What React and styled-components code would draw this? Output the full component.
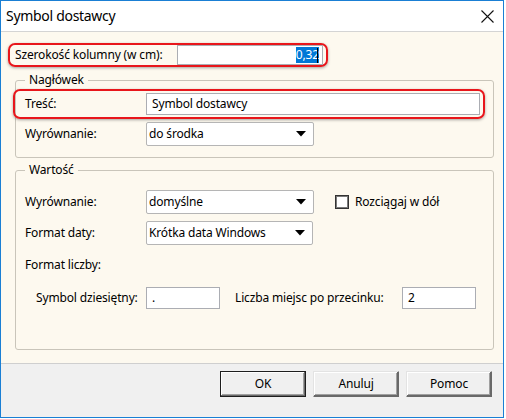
import React from "react";
import styled, { createGlobalStyle } from "styled-components";

const GlobalStyle = createGlobalStyle`
  html, body {
    margin: 0;
    padding: 0;
    background: #fff;
  }
  body {
    font-family: "Noto Sans", "Liberation Sans", sans-serif;
    font-size: 12px;
    line-height: 16px;
    letter-spacing: -0.15px;
    color: #000;
  }
`;

const Window = styled.div`
  width: 504px;
  height: 418px;
  box-sizing: border-box;
  border: 1px solid #1a7fd4;
  display: flex;
  flex-direction: column;
  background: #fff;
`;

const TitleBar = styled.div`
  height: 30px;
  border-bottom: 1px solid #d4d4d4;
  display: flex;
  align-items: center;
  justify-content: space-between;
  padding: 0 9px 0 5px;
  font-size: 14px;
  letter-spacing: -0.3px;
`;

const CloseButton = styled.div`
  width: 14px;
  height: 14px;
  display: flex;
  align-items: center;
  justify-content: center;
`;

const Body = styled.div`
  flex: 1;
  background: #fdf9ef;
  padding: 11px 9px 13px 7px;
  display: flex;
  flex-direction: column;
`;

const Highlight = styled.div`
  box-sizing: border-box;
  height: ${(p) => p.$h}px;
  width: ${(p) => (p.$w ? p.$w + "px" : "auto")};
  margin: ${(p) => p.$margin || "0"};
  padding: ${(p) => p.$pad};
  border: 2px solid #e8161b;
  border-radius: 7px;
  box-shadow: 0 1px 3px rgba(0, 0, 0, 0.35);
  display: flex;
  align-items: center;
`;

const Group = styled.div`
  position: relative;
  margin: ${(p) => p.$mt}px 0 0 7px;
  padding: ${(p) => p.$pt}px 10px 11px 9px;
  border: 1px solid #c9c5ba;
  border-radius: 3px;
  flex: ${(p) => (p.$grow ? 1 : "none")};
  display: flex;
  flex-direction: column;
`;

const Legend = styled.div`
  position: absolute;
  top: -9px;
  left: 9px;
  padding: 0 4px;
  background: #fdf9ef;
`;

const Row = styled.div`
  display: flex;
  align-items: center;
  margin-top: ${(p) => p.$mt || 0}px;
  padding-left: ${(p) => p.$indent || 0}px;
`;

const Label = styled.div`
  width: ${(p) => (p.$w ? p.$w + "px" : "auto")};
  flex: ${(p) => (p.$w ? "none" : 1)};
  margin-left: ${(p) => p.$ml || 0}px;
  white-space: nowrap;
`;

const Field = styled.div`
  box-sizing: border-box;
  width: ${(p) => p.$w}px;
  height: ${(p) => p.$h || 22}px;
  background: #fff;
  border: 1px solid #abadb3;
  display: flex;
  align-items: center;
  justify-content: ${(p) => (p.$right ? "flex-end" : "flex-start")};
  padding: 0 ${(p) => (p.$right ? 4 : 5)}px;
  white-space: nowrap;
`;

const Selected = styled.span`
  background: #0078d7;
  color: #fff;
`;

const Caret = styled.span`
  display: inline-block;
  width: 1px;
  height: 15px;
  background: #000;
  margin-left: -2px;
`;

const Select = styled.div`
  box-sizing: border-box;
  width: ${(p) => p.$w}px;
  height: 24px;
  background: #fff;
  border: 1px solid #b5b5b5;
  border-radius: 2px;
  display: flex;
  align-items: center;
  justify-content: space-between;
  padding: 0 7px 0 2px;
`;

const CheckBox = styled.div`
  box-sizing: border-box;
  width: 14px;
  height: 14px;
  margin-left: 21px;
  background: #fff;
  border: 1px solid #333;
  box-shadow: inset 0 0 0 1px #7a7a7a;
`;

const Footer = styled.div`
  height: 46px;
  border-top: 1px solid #cfcfcf;
  background: #f0f0f0;
  display: flex;
  justify-content: flex-end;
  align-items: flex-start;
  gap: 7px;
  padding: 7px 11px 0 0;
`;

const Button = styled.div`
  box-sizing: border-box;
  width: 86px;
  height: 26px;
  display: flex;
  align-items: center;
  justify-content: center;
  background: #f0f0f0;
  border: 1px solid ${(p) => (p.$default ? "#1e1e1e" : "#e3e3e3")};
  box-shadow: inset -1px -1px 0 #696969, inset 1px 1px 0 #fff,
    inset -2px -2px 0 #a0a0a0;
  ${(p) => (p.$default ? "" : "border-right-color: #696969; border-bottom-color: #696969;")}
`;

const Arrow = () => (
  <svg width="10" height="6" viewBox="0 0 10 6">
    <path d="M0 0 H10 L5 5.5 Z" fill="#000" />
  </svg>
);

const App = () => {
  return (
    <>
      <GlobalStyle />
      <Window>
        <TitleBar>
          <span>Symbol dostawcy</span>
          <CloseButton>
            <svg width="13" height="13" viewBox="0 0 13 13">
              <path d="M0.5 0.5 L12.5 12.5 M12.5 0.5 L0.5 12.5" stroke="#111" strokeWidth="1.1" />
            </svg>
          </CloseButton>
        </TitleBar>
        <Body>
          <Highlight $w={320} $h={24} $pad="0 3px 0 5px">
            <Label>Szerokość kolumny (w cm):</Label>
            <Field $w={146} $h={20} $right>
              <Selected>0,32</Selected>
              <Caret />
            </Field>
          </Highlight>

          <Group $mt={13} $pt={8}>
            <Legend>Nagłówek</Legend>
            <Highlight $h={30} $margin="0 -2px 0 -12px" $pad="0 2px 0 10px">
              <Label $w={121}>Treść:</Label>
              <Field $w={334}>Symbol dostawcy</Field>
            </Highlight>
            <Row $mt={3}>
              <Label $w={121}>Wyrównanie:</Label>
              <Select $w={168}>
                do środka
                <Arrow />
              </Select>
            </Row>
          </Group>

          <Group $mt={12} $pt={19} $grow>
            <Legend>Wartość</Legend>
            <Row>
              <Label $w={121}>Wyrównanie:</Label>
              <Select $w={168}>
                domyślne
                <Arrow />
              </Select>
              <CheckBox />
              <Label $w={120} $ml={6}>Rozciągaj w dół</Label>
            </Row>
            <Row $mt={7}>
              <Label $w={121}>Format daty:</Label>
              <Select $w={167}>
                Krótka data Windows
                <Arrow />
              </Select>
            </Row>
            <Row $mt={12}>
              <Label $w={121}>Format liczby:</Label>
            </Row>
            <Row $mt={14} $indent={11}>
              <Label $w={110}>Symbol dziesiętny:</Label>
              <Field $w={74}>.</Field>
              <Label $w={167} $ml={15}>Liczba miejsc po przecinku:</Label>
              <Field $w={74}>2</Field>
            </Row>
          </Group>
        </Body>
        <Footer>
          <Button $default>OK</Button>
          <Button>Anuluj</Button>
          <Button>Pomoc</Button>
        </Footer>
      </Window>
    </>
  );
};

export default App;
